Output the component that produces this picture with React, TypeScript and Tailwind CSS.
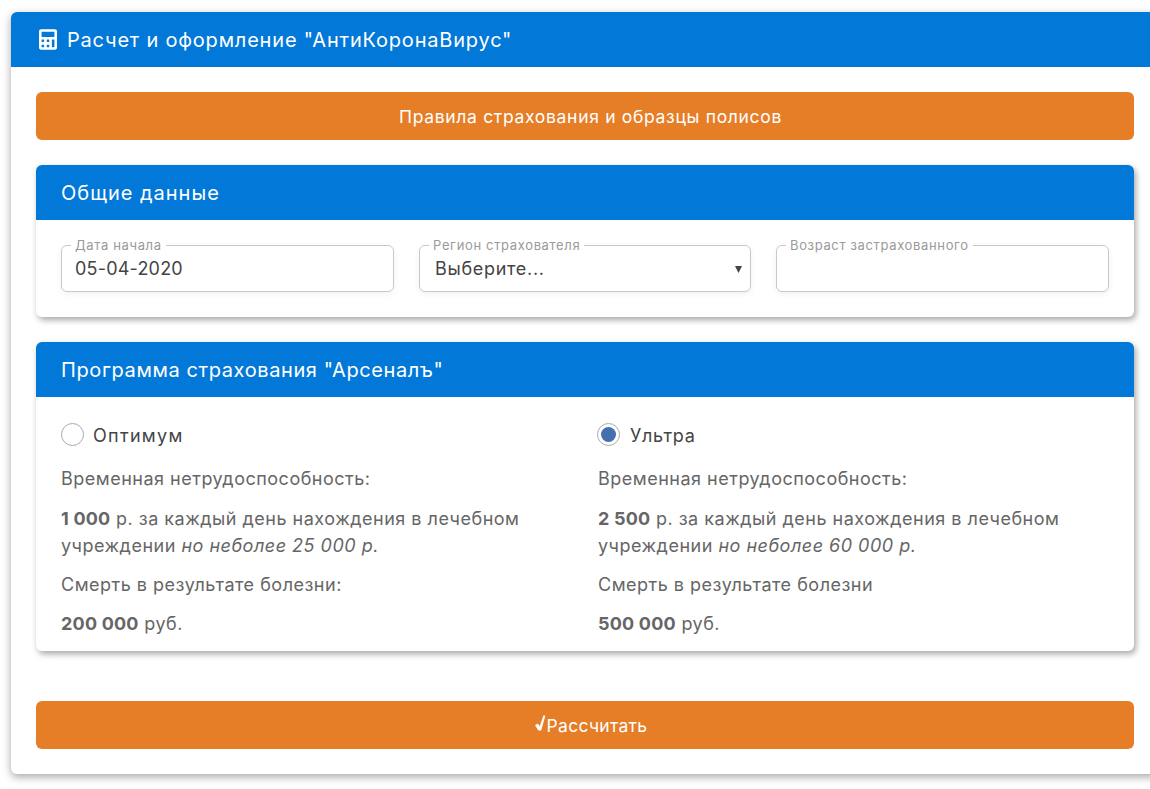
import React from 'react';
import { FaCalculator } from 'react-icons/fa';

function FloatField({ label, width, labelLeft, children }: { label: string; width: string; labelLeft: string; children?: React.ReactNode }) {
  return (
    <div className={`relative h-[47px] ${width} rounded-[6px] border border-[#c8c8c8] shadow-[0_2px_6px_rgba(0,0,0,0.06)] flex items-center`}>
      <span className={`absolute top-[-8px] ${labelLeft} bg-white px-[4px] text-[13px] leading-[15px] text-[#9a9a9a] tracking-[0.65px]`}>
        {label}
      </span>
      {children}
    </div>
  );
}

function Panel({ title, tracking, children }: { title: string; tracking: string; children: React.ReactNode }) {
  return (
    <section className="rounded-[6px] bg-white shadow-[2px_3px_6px_rgba(0,0,0,0.35)] overflow-hidden">
      <h2 className={`h-[55px] bg-[#0278d8] pl-[25px] flex items-center text-[20px] text-white ${tracking}`}>{title}</h2>
      {children}
    </section>
  );
}

function PlanColumn({ name, nameTracking, checked, amount, cap, death, payout }: {
  name: string;
  nameTracking: string;
  checked?: boolean;
  amount: string;
  cap: string;
  death: string;
  payout: string;
}) {
  return (
    <div className="text-[18px] leading-[27px] text-[#666] tracking-[0.5px]">
      <div className="flex items-center h-[24px] mb-[18px] mt-[1px]">
        <span className={`w-[23px] h-[23px] mb-[2px] rounded-full border border-[#aaa] bg-white flex items-center justify-center shrink-0 ${checked ? 'ml-[-1px] mr-[10px]' : 'mr-[9px]'}`}>
          {checked && <span className="w-[15px] h-[15px] rounded-full bg-[#4470b0]" />}
        </span>
        <span className={`text-[18px] text-[#444] ${nameTracking}`}>{name}</span>
      </div>
      <p className="mb-[13px]">Временная нетрудоспособность:</p>
      <p className="mb-[12px]">
        <b className="font-bold tracking-[0.2px]">{amount}</b> р. за каждый день нахождения в лечебном учреждении <i>{cap}</i>
      </p>
      <p className="mb-[12px]">{death}</p>
      <p>
        <b className="font-bold tracking-[0.2px]">{payout}</b> руб.
      </p>
    </div>
  );
}

function OrangeButton({ tracking, children }: { tracking: string; children: React.ReactNode }) {
  return (
    <button className={`h-[48px] w-full rounded-[6px] bg-[#e57e27] pt-[2px] pl-[11px] text-white text-[17.5px] ${tracking} flex items-center justify-center`}>
      {children}
    </button>
  );
}

export default function App() {
  return (
    <div className="h-[789px] w-[1150px] overflow-hidden bg-white pt-[12px] pl-[11px] font-['Inter',sans-serif]">
      <div className="w-[1148px] rounded-[6px] bg-white shadow-[0_3px_8px_rgba(0,0,0,0.35)] overflow-hidden">
        <header className="h-[55px] bg-[#0278d8] pl-[28px] flex items-center text-white text-[20px] tracking-[0.8px]">
          <FaCalculator className="w-[18px] h-[21px] mr-[10px]" />
          Расчет и оформление "АнтиКоронаВирус"
        </header>
        <div className="p-[25px] flex flex-col gap-[25px]">
          <OrangeButton tracking="tracking-[0.68px]">Правила страхования и образцы полисов</OrangeButton>

          <Panel title="Общие данные" tracking="tracking-[1px]">
            <div className="p-[25px] flex gap-[25px]">
              <FloatField label="Дата начала" width="w-[333px]" labelLeft="left-[9px]">
                <span className="pl-[13px] text-[18px] tracking-[0.2px] text-[#444]">05-04-2020</span>
              </FloatField>
              <FloatField label="Регион страхователя" width="w-[332px]" labelLeft="left-[9px]">
                <span className="pl-[15px] text-[18px] tracking-[0.7px] text-[#444]">Выберите...</span>
                <svg className="absolute right-[8px] top-[20px]" width="7" height="7" viewBox="0 0 7 7"><path d="M0 0h7L3.5 7z" fill="#444" /></svg>
              </FloatField>
              <FloatField label="Возраст застрахованного" width="w-[333px]" labelLeft="left-[9px]" />
            </div>
          </Panel>

          <Panel title={'Программа страхования "Арсеналъ"'} tracking="tracking-[0.6px]">
            <div className="pt-[25px] pb-[3px] pl-[25px] pr-[60px] grid grid-cols-[537px_1fr] h-[254px]">
              <PlanColumn name="Оптимум" nameTracking="tracking-[1.3px]" amount="1 000" cap="но неболее 25 000 р." death="Смерть в результате болезни:" payout="200 000" />
              <PlanColumn name="Ультра" nameTracking="tracking-[0.7px]" checked amount="2 500" cap="но неболее 60 000 р." death="Смерть в результате болезни" payout="500 000" />
            </div>
          </Panel>

          <div className="mt-[25px]">
            <OrangeButton tracking="tracking-[0.3px]">
              <svg width="13" height="20" viewBox="0 0 13 20" className="mb-[7px]"><path d="M1 12.2 L4 10.6 L5.6 13.4 L9.4 2.5 L11.4 2.5 L7.2 17.5 L4.4 17.5 Z" fill="#fff" /></svg>
              Рассчитать
            </OrangeButton>
          </div>
        </div>
      </div>
    </div>
  );
}
